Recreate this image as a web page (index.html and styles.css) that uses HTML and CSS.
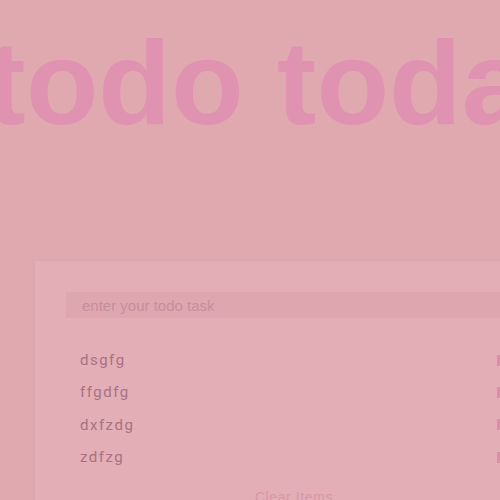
FILE: index.html
```html
<!DOCTYPE html>
<html>
<head>
<meta charset="utf-8">
<link rel="stylesheet" href="styles.css">
</head>
<body>
<h1 class="title">todo today</h1>
<div class="card">
  <input class="task-input" type="text" placeholder="enter your todo task">
  <ul class="list">
    <li class="item"><span class="item-text">dsgfg</span><button class="del"></button></li>
    <li class="item"><span class="item-text">ffgdfg</span><button class="del"></button></li>
    <li class="item"><span class="item-text">dxfzdg</span><button class="del"></button></li>
    <li class="item"><span class="item-text">zdfzg</span><button class="del"></button></li>
  </ul>
  <div class="clear-row"><button class="clear">Clear Items</button></div>
</div>
</body>
</html>
```
FILE: styles.css
```css
html, body {
  margin: 0;
  padding: 0;
  overflow: hidden;
  height: 100%;
}
body {
  background: #e0a9b0;
  font-family: "Liberation Sans", Arial, sans-serif;
}
.title {
  margin: 14px 0 0 -14px;
  font-size: 119px;
  font-weight: bold;
  line-height: normal;
  color: #e093b0;
  white-space: nowrap;
}
.card {
  margin: 111px 0 0 36px;
  width: 456px;
  padding: 30px;
  background: #e3aeb6;
  box-shadow: 0 0 0 1px #e2adb5, -1px 0 3px rgba(200, 140, 150, 0.25);
}
.task-input {
  display: block;
  width: 100%;
  box-sizing: border-box;
  height: 26px;
  border: none;
  outline: none;
  background: #dea7b0;
  padding: 0 16px;
  font-family: "Liberation Sans", Arial, sans-serif;
  font-size: 15px;
  color: #b07888;
}
.task-input::placeholder {
  color: #c78e9c;
}
.list {
  list-style: none;
  margin: 26px 0 0;
  padding: 0;
}
.item {
  display: flex;
  align-items: center;
  height: 32.3px;
  padding-left: 14px;
}
.item-text {
  flex: 1;
  font-family: Roboto, "Liberation Sans", sans-serif;
  font-size: 15px;
  letter-spacing: 1.5px;
  color: #a87282;
}
.del {
  width: 25px;
  height: 11px;
  border: none;
  padding: 0;
  background: #db8ea6;
}
.clear-row {
  display: flex;
  justify-content: center;
  margin-top: 16px;
}
.clear {
  border: none;
  background: transparent;
  font-family: "Liberation Sans", Arial, sans-serif;
  font-size: 14px;
  letter-spacing: 0.6px;
  color: #d897a8;
  padding: 0;
}
```
